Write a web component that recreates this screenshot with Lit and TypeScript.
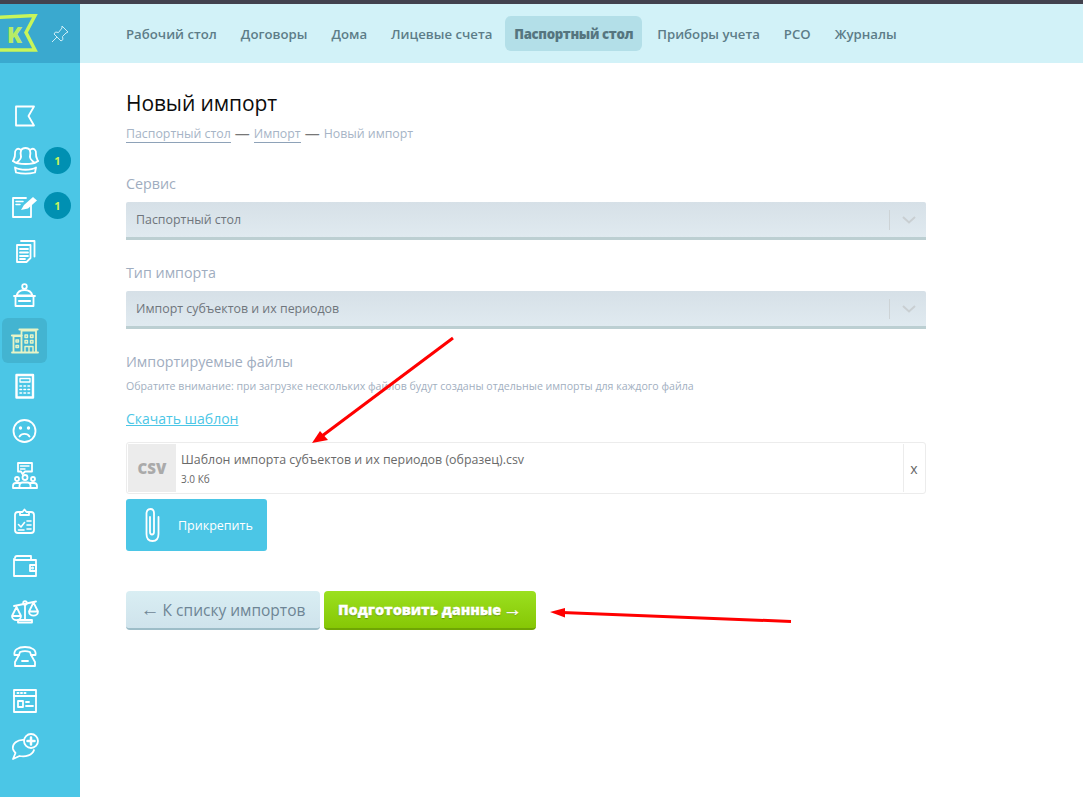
import { LitElement, html, css, svg } from "lit";
import { customElement } from "lit/decorators.js";

const icons = [
  svg`<path d="M6 5.500H24L18.500 15L24 24.500H6Z"/>`,
  svg`<path d="M11 10.500C10 5 11 2 15.500 2C20 2 21 5 20 10.500"/><path d="M11 4C7.500 1 4.500 4 5 8C5.300 11 4 12.500 3 15"/><path d="M20 4C23.500 1 26.500 4 26 8C25.700 11 27 12.500 28 15"/><path d="M11 11C11 14 8 15 6.500 17M20 11C20 14 23 15 24.500 17"/><path d="M3 15C8 19 23 19 28 15"/><path d="M5 21.500C10 24.500 21 24.500 26 21.500L25 26.500C19 28 12 28 6 26.500Z"/>`,
  svg`<path d="M21 13V26H3V7H16"/><path d="M6 10.500H13M6 13.500H10" stroke-width="1.500"/><path d="M11 19L14 14L23 6L27 9.500L18 17.500Z" fill="#fff" stroke="none"/>`,
  svg`<path d="M7 9H20.500V22L16.500 26H7Z"/><path d="M11 5H24.500V20.500"/><path d="M10 13H18M10 16.500H18M10 20H18M10 23H15"/>`,
  svg`<circle cx="14.500" cy="5.500" r="2.300"/><path d="M14.500 9C10 9 7.500 11 6.500 14.500H22.500C21.500 11 19 9 14.500 9Z"/><path d="M4 15H25M5.500 15V25H23.500V15"/><path d="M9 20H20" stroke-width="2.200"/>`,
  svg`<g stroke="#e8f4c6"><path d="M11.500 26V4.500H26V26M3.500 26V10H11.500M2 26.500H28"/><path d="M9.500 3.500H27.500M2 9.500H11.500" stroke-width="2.200"/><path d="M15 9H17.500V11.500H15ZM20.500 9H23V11.500H20.500ZM15 14.500H17.500V17H15ZM20.500 14.500H23V17H20.500ZM6 14H8.500V16H6ZM6 19.500H8.500V21.500H6Z" stroke-width="1.400"/><path d="M15 26V20.500H23V26M19 20.500V26" stroke-width="1.400"/></g>`,
  svg`<path d="M6.500 4H23V26.500H6.500Z" stroke-width="2.400"/><path d="M10 7.500H20V11H10Z" stroke-width="1.300"/><path d="M10 15H11.500M14 15H15.500M18 15H19.500M10 18.500H11.500M14 18.500H15.500M18 18.500H19.500M10 22H11.500M14 22H15.500M18 22H19.500" stroke-width="1.600"/>`,
  svg`<circle cx="14.500" cy="15" r="11"/><circle cx="10.500" cy="12" r=".8"/><circle cx="18.500" cy="12" r=".8"/><path d="M9.500 20.500C11.500 17 17.500 17 19.500 20.500"/>`,
  svg`<path d="M8 2H22V10.500H15L12.500 13L11 10.500H8Z"/><path d="M10.500 5H19M10.500 8H15" stroke-width="1.400"/><circle cx="15" cy="16.500" r="2.500"/><circle cx="7" cy="18" r="2"/><circle cx="23" cy="18" r="2"/><path d="M9.500 27V24.500Q9.500 21.500 12.500 21.500H17.500Q20.500 21.500 20.500 24.500V27Z"/><path d="M9.500 22H6Q3 22 3 25V27H9.500M20.500 22H24Q27 22 27 25V27H20.500"/>`,
  svg`<path d="M10 6H8Q5 6 5 9V24Q5 27 8 27H21Q24 27 24 24V9Q24 6 21 6H19"/><path d="M10 9H19V6H16.500L14.500 3.500L12.500 6H10Z"/><path d="M8.500 18.500L11 21L14.500 16.500M17 15H21M17 19H21M17 23H21M8.500 24H14" stroke-width="1.600"/>`,
  svg`<path d="M5 7Q5 5 7 5H21V9"/><path d="M4 8V25H26V9H6Q4 9 4 8"/><path d="M20 14H26V20H20Z"/><circle cx="22.500" cy="17" r=".6"/>`,
  svg`<path d="M4 10L26 5.500M15 8V23"/><circle cx="15" cy="7" r="1.800"/><path d="M2 20H11C11 25.500 2 25.500 2 20ZM19 15.500H28C28 21 19 21 19 15.500ZM6.500 11L2 20M6.500 11L11 20M23.500 6.500L19 15.500M23.500 6.500L28 15.500"/><path d="M8 26.500H22V24H8Z"/>`,
  svg`<path d="M4.500 14C3.500 9 8 6 15 6S26.500 9 25.500 14H21L20 11C17 10 13 10 10 11L9 14Z"/><path d="M9 14L5 21V25H25V21L21 14"/><path d="M12 20H18"/>`,
  svg`<path d="M4 4H26V26H4Z"/><path d="M4 10H26"/><path d="M7.500 7H8.500M11 7H12M14.500 7H15.500" stroke-width="2"/><path d="M8 15H13V21H8ZM16 16H19M16 20H23"/>`,
  svg`<path d="M15 9C7 8 2 13 3 18C3.500 20 4.500 21 5.500 22L3 28L9.500 25C15.500 26.500 22.500 24 24 19"/><circle cx="21" cy="10" r="7" fill="#4bc6e6"/><path d="M21 6.500V13.500M17.500 10H24.500" stroke-width="2.500"/>`,
];

const navItems = ["Рабочий стол", "Договоры", "Дома", "Лицевые счета", "Паспортный стол", "Приборы учета", "РСО", "Журналы"];

@customElement("app-root")
export class AppRoot extends LitElement {
  static styles = css`
    :host { display: block; position: relative; height: 797px; overflow: hidden; background: #fff; font-family: "Open Sans", "Noto Sans", sans-serif; }
    .topbar { height: 4px; background: #42424e; }
    .shell { display: flex; height: 793px; }
    .side { width: 80px; flex: none; background: #4bc6e6; }
    .brand { height: 59px; background: #3aa9cf; display: flex; align-items: center; }
    .logo { width: 40px; height: 42px; margin-top: 3px; position: relative; flex: none; }
    .logo svg { display: block; }
    .logo span { position: absolute; left: 7px; top: 6px; font: 800 22px/28px "Open Sans", sans-serif; color: #b6ec66; }
    .pin { margin-left: 11px; margin-top: 0; }
    .items { padding: 30px 0 0 2px; display: flex; flex-direction: column; }
    .item { width: 45px; height: 45px; display: flex; align-items: center; justify-content: center; border-radius: 6px; position: relative; }
    .item.on { background: #43b4d1; }
    .item svg { fill: none; stroke: #fff; stroke-width: 1.800; stroke-linejoin: round; stroke-linecap: round; }
    .badge { position: absolute; left: 42px; top: 9px; width: 27px; height: 27px; border-radius: 50%; background: #0090b2; color: #c8f55a; font: 700 11px/27px "Open Sans", sans-serif; text-align: center; }
    .col { flex: 1; min-width: 0; }
    nav { height: 59px; background: #d2f2f8; display: flex; align-items: center; padding-left: 37px; box-sizing: border-box; gap: 6px; }
    nav a { height: 35px; display: flex; align-items: center; padding: 0 9px; border-radius: 6px; font: 600 13.200px "Open Sans", sans-serif; color: #5d7d88; white-space: nowrap; }
    nav a.on { background: #b3dfe8; font-weight: 800; font-size: 13.200px; letter-spacing: -.35px; color: #55757f; margin-left: -2px; }
    main { padding: 0 0 0 46px; width: 800px; }
    h1 { margin: 27px 0 0; font: 400 21px/26px "Open Sans", sans-serif; color: #0c0c0c; letter-spacing: -.1px; }
    .crumbs { margin-top: 9px; height: 20px; display: flex; align-items: flex-start; gap: 4px; font-size: 12.350px; line-height: 17px; color: #a6b4c6; white-space: nowrap; }
    .crumbs a { border-bottom: 1px solid #8ea2b8; height: 17px; }
    .crumbs i { font-style: normal; color: #777; font-size: 15px; line-height: 16px; }
    .lbl { font-size: 14.300px; line-height: 20px; color: #9fadc0; }
    .l1 { margin-top: 29px; }
    .l2 { margin-top: 23px; }
    .sel { margin-top: 8px; height: 38px; box-sizing: border-box; border-bottom: 3px solid #bccfd2; border-radius: 2px 2px 0 0; background: linear-gradient(#d6e0e7, #e0eaf0); display: flex; align-items: center; padding-left: 10px; font-size: 12.400px; color: #6f757c; }
    .sel .grow { flex: 1; }
    .sel .div { width: 1px; height: 20px; background: #cdd3d6; }
    .sel svg { margin: 0 10px 0 12px; }
    .l3 { margin-top: 23px; }
    .note { margin-top: 6px; font-size: 10.600px; line-height: 16px; color: #a2afbf; white-space: nowrap; }
    .dl { display: block; margin-top: 15px; width: max-content; font-size: 14px; line-height: 20px; color: #4bc6e6; text-decoration: underline; }
    .file { margin-top: 13px; height: 52px; box-sizing: border-box; border: 1px solid #ececec; border-radius: 3px; padding: 1px; display: flex; align-items: stretch; }
    .csv { width: 48px; background: #ececec; color: #aaa; font-weight: 800; font-size: 15px; display: flex; align-items: center; justify-content: center; flex: none; }
    .info { flex: 1; padding-left: 5px; }
    .fname { font-size: 12.400px; line-height: 18px; margin-top: 7px; color: #6a6a6a; }
    .fsize { font-size: 10px; line-height: 14px; margin-top: 3px; color: #666; }
    .x { width: 20px; border-left: 1px solid #ececec; color: #666; font-size: 14px; display: flex; align-items: center; justify-content: center; flex: none; }
    .attach { margin-top: 5px; width: 141px; height: 52px; background: #4bc6e6; border-radius: 3px; display: flex; align-items: center; color: #fff; font-size: 12.500px; box-sizing: border-box; padding-left: 17px; gap: 17px; }
    .btns { margin-top: 40px; display: flex; gap: 4px; }
    .btn { height: 39px; box-sizing: border-box; border-radius: 4px; display: flex; align-items: center; justify-content: center; white-space: nowrap; }
    .btn .ar { font-family: "Liberation Sans", sans-serif; font-weight: 400; font-size: 19px; }
    .back { width: 194px; background: linear-gradient(#d9eef3, #cfe3ec); border-bottom: 2px solid #9dbdc8; color: #6e8595; font-size: 15.500px; gap: 3px; }
    .go { width: 212px; background: linear-gradient(#9be01f, #86c705); border-bottom: 2px solid #6fa504; color: #fff; font-weight: 800; font-size: 14.500px; -webkit-text-stroke: .3px #fff; text-shadow: 0 1px 1px rgba(60,90,0,.5); letter-spacing: -.1px; gap: 2px; }
    .arrows { position: absolute; left: 0; top: 0; pointer-events: none; }
  `;

  render() {
    return html`
      <div class="topbar"></div>
      <div class="shell">
        <aside class="side">
          <div class="brand">
            <div class="logo">
              <svg width="40" height="42" viewBox="0 0 40 42"><path d="M-3 3.500L35 1.500L26 18.500L35 36H-3Z" fill="none" stroke="#c8f55a" stroke-width="3.500"/></svg>
              <span>K</span>
            </div>
            <svg class="pin" width="18" height="18" viewBox="0 0 18 18" fill="none" stroke="#cfeef6" stroke-width="1"><path d="M11 1L17 7L15 8L11.500 11.500L12 14.500L10 16L3 9L4.500 7L7.500 7.500L11 3Z"/><path d="M6 12L1 17"/></svg>
          </div>
          <div class="items">
            ${icons.map((ic, i) => html`
              <div class="item ${i === 5 ? "on" : ""}">
                <svg width="30" height="30" viewBox="0 0 30 30">${ic}</svg>
                ${i === 1 || i === 2 ? html`<span class="badge">1</span>` : ""}
              </div>`)}
          </div>
        </aside>
        <div class="col">
          <nav>${navItems.map((n, i) => html`<a class=${i === 4 ? "on" : ""}>${n}</a>`)}</nav>
          <main>
            <h1>Новый импорт</h1>
            <div class="crumbs"><a>Паспортный стол</a><i>—</i><a>Импорт</a><i>—</i><span>Новый импорт</span></div>
            <div class="lbl l1">Сервис</div>
            ${this.select("Паспортный стол")}
            <div class="lbl l2">Тип импорта</div>
            ${this.select("Импорт субъектов и их периодов")}
            <div class="lbl l3">Импортируемые файлы</div>
            <div class="note">Обратите внимание: при загрузке нескольких файлов будут созданы отдельные импорты для каждого файла</div>
            <a class="dl">Скачать шаблон</a>
            <div class="file">
              <div class="csv">CSV</div>
              <div class="info">
                <div class="fname">Шаблон импорта субъектов и их периодов (образец).csv</div>
                <div class="fsize">3.0 Кб</div>
              </div>
              <div class="x">x</div>
            </div>
            <div class="attach">
              <svg width="18" height="34" viewBox="0 0 18 34" fill="none" stroke="#fff" stroke-width="1.800" stroke-linecap="round"><path d="M7 9V24Q7 26.500 9 26.500T11 24V5Q11 1 7.500 1T3.500 5V26Q3.500 33 9.500 33T15.500 26V9"/></svg>
              <span>Прикрепить</span>
            </div>
            <div class="btns">
              <div class="btn back"><span class="ar">←</span><span>К списку импортов</span></div>
              <div class="btn go"><span>Подготовить данные</span><span class="ar">→</span></div>
            </div>
          </main>
        </div>
      </div>
      <svg class="arrows" width="1083" height="797" viewBox="0 0 1083 797">
        <path d="M453 338L322 436" stroke="#f00" stroke-width="3" fill="none"/>
        <path d="M312 443L320 431L328 440Z" fill="#f00"/>
        <path d="M791 621.500L562 612.500" stroke="#f00" stroke-width="3" fill="none"/>
        <path d="M550 612L565 608V617.500Z" fill="#f00"/>
      </svg>
    `;
  }

  select(text: string) {
    return html`<div class="sel"><span>${text}</span><span class="grow"></span><span class="div"></span>
      <svg width="14" height="8" viewBox="0 0 14 8" fill="none" stroke="#c9cfd2" stroke-width="2"><path d="M1 1L7 6.500L13 1"/></svg></div>`;
  }
}
